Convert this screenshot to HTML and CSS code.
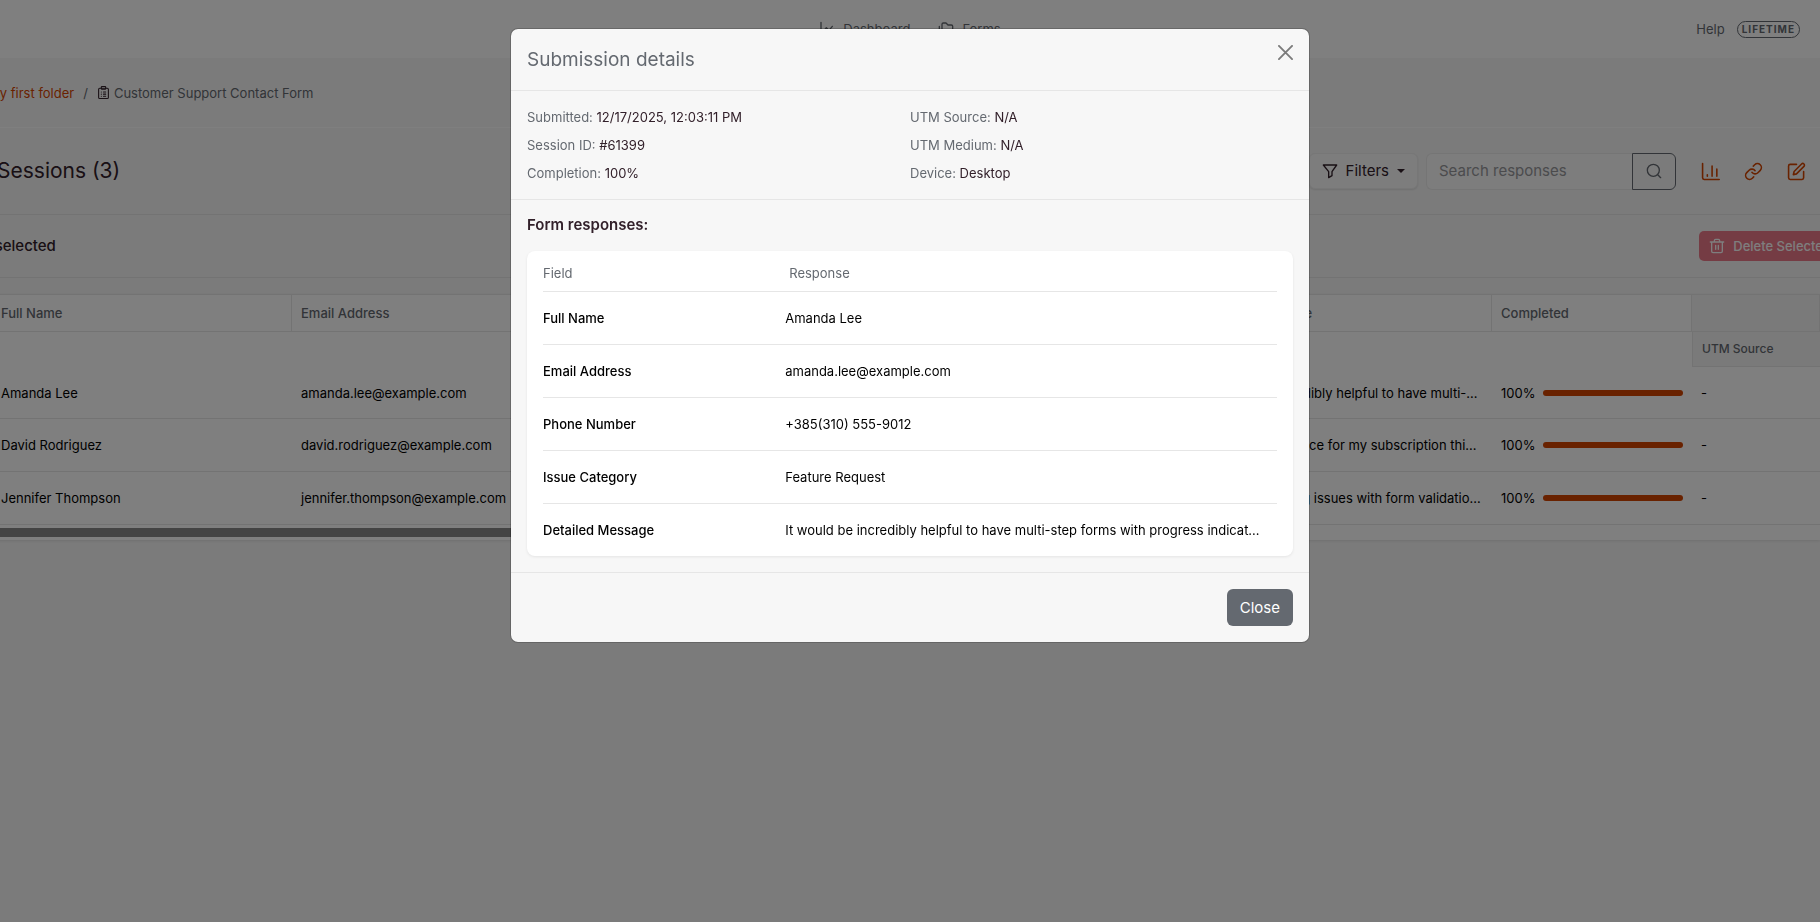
FILE: index.html
```html
<!DOCTYPE html>
<html lang="en">
<head>
  <meta charset="UTF-8" />
  <meta name="viewport" content="width=device-width, initial-scale=1" />
  <title>Sessions - Customer Support Contact Form</title>
  <link rel="stylesheet" href="styles.css">
</head>
<body>
  <header class="navbar">
    <nav class="nav-links">
      <a href="#">
        <svg class="icon" viewBox="0 0 24 24"><path d="M3 2v19h18" /><path d="M7 15l4-5 4 4 5-6" /></svg>
        Dashboard
      </a>
      <a href="#">
        <svg class="icon" viewBox="0 0 24 24"><path d="M8 3h4l3 3h5a2 2 0 0 1 2 2v8a2 2 0 0 1-2 2H8a2 2 0 0 1-2-2V5a2 2 0 0 1 2-2z" /><path d="M2 8v12a2 2 0 0 0 2 2h14" /></svg>
        Forms
      </a>
    </nav>
    <div class="nav-right">
      <a href="#">Help</a>
      <span class="plan-badge">LIFETIME</span>
    </div>
  </header>

  <nav class="breadcrumb">
    <a href="#">My first folder</a>
    <span>/</span>
    <span class="current">
      <svg class="icon" viewBox="0 0 24 24"><rect x="3" y="4" width="18" height="19" rx="2" /><rect x="8" y="1" width="8" height="5" rx="1" /><path d="M8 11h.01M12 11h4M8 15h.01M12 15h4M8 19h.01M12 19h4" /></svg>
      Customer Support Contact Form
    </span>
  </nav>

  <main>
    <div class="toolbar">
      <h1>Sessions (3)</h1>
      <div class="tools">
        <button type="button" class="filter-btn">
          <svg class="icon" viewBox="0 0 24 24"><path d="M2 3h20l-7 10v6l-5 3v-9z" /></svg>
          Filters
          <span class="caret"></span>
        </button>
        <form class="search">
          <input type="text" placeholder="Search responses" aria-label="Search responses" />
          <button type="button" aria-label="Search">
            <svg class="icon" viewBox="0 0 24 24"><circle cx="11" cy="11" r="9" /><path d="M18 18l4 4" /></svg>
          </button>
        </form>
        <div class="actions">
          <a href="#" aria-label="Analytics"><svg class="icon" viewBox="0 0 24 24"><path d="M2 2v18a2 2 0 0 0 2 2h19M8 16v2M14 5v13M20 9v9" /></svg></a>
          <a href="#" aria-label="Link"><svg class="icon" viewBox="0 0 24 24"><path d="M10 13a5 5 0 0 0 7.540.540l3-3a5 5 0 0 0-7.070-7.070l-1.720 1.710" /><path d="M14 11a5 5 0 0 0-7.540-.540l-3 3a5 5 0 0 0 7.070 7.070l1.710-1.710" /></svg></a>
          <a href="#" aria-label="Edit"><svg class="icon" viewBox="0 0 24 24"><path d="M12 3H4a2 2 0 0 0-2 2v15a2 2 0 0 0 2 2h15a2 2 0 0 0 2-2v-8" /><path d="M18.400 2.600a2.100 2.100 0 0 1 3 3L12 15l-4 1 1-4z" /></svg></a>
        </div>
      </div>
    </div>

    <div class="selection-bar">
      <span>0 selected</span>
      <button type="button" class="delete-btn" disabled>
        <svg class="icon" viewBox="0 0 24 24"><path d="M2 6h20M4 6v14a2 2 0 0 0 2 2h12a2 2 0 0 0 2-2V6M8 6V4a2 2 0 0 1 2-2h4a2 2 0 0 1 2 2v2M10 11v6M14 11v6" /></svg>
        Delete Selected
      </button>
    </div>

    <div class="grid-card">
      <table class="grid">
        <colgroup>
          <col class="col-wide"><col class="col-wide"><col class="col-wide"><col class="col-wide"><col class="col-wide"><col class="col-done"><col class="col-utm">
        </colgroup>
        <thead>
          <tr class="head-main">
            <th>Full Name</th>
            <th>Email Address</th>
            <th>Phone Number</th>
            <th>Issue Category</th>
            <th>Detailed Message</th>
            <th>Completed</th>
            <th class="utm"></th>
          </tr>
          <tr class="head-sub">
            <th colspan="6"></th>
            <th class="utm">UTM Source</th>
          </tr>
        </thead>
        <tbody>
          <tr>
            <td>Amanda Lee</td>
            <td>amanda.lee@example.com</td>
            <td>+385(310) 555-9012</td>
            <td>Feature Request</td>
            <td>It would be incredibly helpful to have multi-step forms with progress indicators</td>
            <td><div class="done">100%<div class="progress"></div></div></td>
            <td>-</td>
          </tr>
          <tr>
            <td>David Rodriguez</td>
            <td>david.rodriguez@example.com</td>
            <td>+385(310) 555-3456</td>
            <td>Billing</td>
            <td>I was charged twice for my subscription this month</td>
            <td><div class="done">100%<div class="progress"></div></div></td>
            <td>-</td>
          </tr>
          <tr>
            <td>Jennifer Thompson</td>
            <td>jennifer.thompson@example.com</td>
            <td>+385(310) 555-7890</td>
            <td>Technical Issue</td>
            <td>I am experiencing issues with form validation on mobile</td>
            <td><div class="done">100%<div class="progress"></div></div></td>
            <td>-</td>
          </tr>
        </tbody>
      </table>
      <div class="scroll-track"><div class="scroll-thumb"></div></div>
    </div>
  </main>

  <div class="backdrop">
    <div class="modal" role="dialog" aria-modal="true" aria-labelledby="modalTitle">
      <div class="modal-header">
        <h2 id="modalTitle">Submission details</h2>
        <button type="button" class="close-x" aria-label="Close dialog">
          <svg viewBox="0 0 16 16"><path d="M1 1l14 14M15 1L1 15" /></svg>
        </button>
      </div>
      <div class="meta">
        <div>Submitted: <b>12/17/2025, 12:03:11 PM</b></div>
        <div>UTM Source: <b>N/A</b></div>
        <div>Session ID: <b>#61399</b></div>
        <div>UTM Medium: <b>N/A</b></div>
        <div>Completion: <b>100%</b></div>
        <div>Device: <b>Desktop</b></div>
      </div>
      <div class="modal-body">
        <h3>Form responses:</h3>
        <div class="card">
          <table class="responses">
            <thead>
              <tr><th>Field</th><th>Response</th></tr>
            </thead>
            <tbody>
              <tr><th>Full Name</th><td>Amanda Lee</td></tr>
              <tr><th>Email Address</th><td>amanda.lee@example.com</td></tr>
              <tr><th>Phone Number</th><td>+385(310) 555-9012</td></tr>
              <tr><th>Issue Category</th><td>Feature Request</td></tr>
              <tr><th>Detailed Message</th><td>It would be incredibly helpful to have multi-step forms with progress indicators</td></tr>
            </tbody>
          </table>
        </div>
      </div>
      <div class="modal-footer">
        <button type="button" class="close-btn">Close</button>
      </div>
    </div>
  </div>
</body>
</html>
```
FILE: styles.css
```css
* {
  box-sizing: border-box;
}
body {
  margin: 0;
  min-height: 100vh;
  overflow: hidden;
  font-family: Inter, "Liberation Sans", sans-serif;
  font-size: 13px;
  line-height: 20px;
  color: #32202a;
  background: #f7f7f7;
}
h1, h2, h3 {
  margin: 0;
}
a {
  color: #d34500;
  text-decoration: none;
}
button, input {
  font: inherit;
  color: inherit;
}
.icon {
  width: 16px;
  height: 16px;
  flex: none;
  fill: none;
  stroke: currentColor;
  stroke-width: 2;
  stroke-linecap: round;
  stroke-linejoin: round;
}

/* top bar */
.navbar {
  display: grid;
  grid-template-columns: 1fr auto 1fr;
  align-items: center;
  height: 58px;
  padding: 0 20px;
  background: #fff;
}
.navbar a {
  display: flex;
  align-items: center;
  gap: 8px;
  color: #646970;
}
.nav-links {
  grid-column: 2;
  display: flex;
  gap: 28px;
}
.nav-right {
  display: flex;
  justify-content: flex-end;
  align-items: center;
  gap: 12px;
}
.plan-badge {
  padding: 0 4px;
  border: 1px solid #646970;
  border-radius: 9px;
  font-size: 10px;
  line-height: 15px;
  font-weight: 700;
  letter-spacing: 1px;
  color: #646970;
}

.breadcrumb {
  display: flex;
  align-items: center;
  gap: 9px;
  height: 70px;
  margin-left: -12px;
  border-bottom: 1px solid #fff;
  color: #646970;
}
.current {
  display: flex;
  align-items: center;
  gap: 4px;
}
.current .icon {
  width: 13px;
  height: 13px;
  color: #32202a;
}

/* sessions toolbar */
.toolbar {
  display: flex;
  justify-content: space-between;
  align-items: center;
  height: 87px;
  margin-left: -3px;
  padding-right: 14px;
  border-bottom: 1px solid #e6e6e6;
}
.toolbar h1 {
  font-size: 21px;
  font-weight: 400;
}
.tools {
  display: flex;
  align-items: center;
}
.filter-btn {
  display: flex;
  align-items: center;
  gap: 8px;
  height: 36px;
  margin-right: 8px;
  padding: 0 12px;
  border: 1px solid #eee;
  border-radius: 6px;
  background: #fbfbfb;
  box-shadow: 0 1px 2px rgba(0, 0, 0, 0.1);
  font-size: 15px;
}
.caret {
  border: 4px solid transparent;
  border-top-color: currentColor;
  border-bottom: 0;
}
.search {
  display: flex;
  height: 37px;
}
.search input {
  width: 206px;
  padding: 0 12px;
  border: 1px solid #eaeaea;
  border-right: 0;
  border-radius: 6px 0 0 6px;
  background: #fafafa;
  font-size: 15px;
}
.search input::placeholder {
  color: #97979b;
}
.search button {
  display: flex;
  align-items: center;
  justify-content: center;
  width: 44px;
  padding: 0;
  border: 1px solid #646970;
  border-radius: 0 6px 6px 0;
  background: transparent;
  color: #646970;
}
.actions {
  display: flex;
  gap: 24px;
  margin-left: 25px;
}
.actions a {
  display: flex;
}
.actions .icon {
  width: 19px;
  height: 19px;
}

.selection-bar {
  display: flex;
  justify-content: space-between;
  align-items: center;
  height: 63px;
  margin: 0 -21px 16px -19px;
  border-bottom: 1px solid #e6e6e6;
  font-size: 15px;
}
.selection-bar span {
  font-weight: 500;
}
.delete-btn {
  display: flex;
  align-items: center;
  gap: 8px;
  height: 30px;
  padding: 0 10px;
  border: 0;
  border-radius: 5px;
  background: #e6364f;
  color: #fff;
  font-size: 13px;
  font-weight: 500;
  opacity: 0.65;
}

/* data grid */
.grid-card {
  margin-left: -8px;
  border-top: 1px solid #e6e6e6;
  background: #fff;
  box-shadow: 0 1px 3px rgba(0, 0, 0, 0.1);
}
.grid {
  width: 100%;
  table-layout: fixed;
  border-collapse: separate;
  border-spacing: 0;
  color: #000;
}
.col-wide {
  width: 300px;
}
.col-done {
  width: 200px;
}
.grid th, .grid td {
  padding: 0 9px;
  text-align: left;
  overflow: hidden;
  white-space: nowrap;
  text-overflow: ellipsis;
}
.grid th {
  font-weight: 500;
  color: #646970;
}
.head-main th {
  height: 37px;
  border-right: 1px solid #e6e6e6;
  border-bottom: 1px solid #e6e6e6;
}
.head-sub th {
  height: 35px;
  font-size: 12px;
}
.grid .utm {
  background: #f5f5f5;
  border-bottom: 1px solid #e6e6e6;
}
.head-sub .utm {
  border-left: 1px solid #e6e6e6;
}
.grid td {
  height: 53px;
  border-bottom: 1px solid #e6e6e6;
}
.grid tbody tr:first-child td {
  height: 52px;
}
.done {
  display: flex;
  align-items: center;
  gap: 8px;
}
.progress {
  flex: 1;
  height: 6px;
  border-radius: 3px;
  background: #d34500;
}
.scroll-track {
  padding: 3px 0;
}
.scroll-thumb {
  width: 50%;
  height: 9px;
  background: #888;
}

/* submission modal */
.backdrop {
  position: fixed;
  inset: 0;
  padding: 28px 16px;
  background: rgba(0, 0, 0, 0.5);
}
.modal {
  max-width: 800px;
  margin: 0 auto;
  border: 1px solid rgba(0, 0, 0, 0.18);
  border-radius: 8px;
  background: #f7f7f7;
  background-clip: padding-box;
}
.modal-header {
  display: flex;
  justify-content: space-between;
  align-items: flex-start;
  padding: 16px;
  border-bottom: 1px solid #e6e6e6;
}
.modal-header h2 {
  font-size: 19px;
  line-height: 29px;
  font-weight: 400;
  color: #646970;
}
.close-x {
  display: flex;
  padding: 0;
  border: 0;
  background: none;
}
.close-x svg {
  width: 15px;
  height: 15px;
  stroke: #7b7b7b;
  stroke-width: 2;
  stroke-linecap: round;
}
.meta {
  display: grid;
  grid-template-columns: 1fr 1fr;
  gap: 8px 0;
  padding: 16px;
  border-bottom: 1px solid #e6e6e6;
  color: #646970;
}
.meta b {
  font-weight: 400;
  color: #32202a;
}
.modal-body {
  padding: 15px 16px 16px;
}
.modal-body h3 {
  margin-bottom: 16px;
  font-size: 15px;
  font-weight: 600;
}
.card {
  padding: 0 16px;
  border-radius: 8px;
  background: #fff;
  box-shadow: 0 1px 3px rgba(0, 0, 0, 0.08);
}
.responses {
  width: 100%;
  table-layout: fixed;
  border-collapse: separate;
  border-spacing: 0;
  color: #000;
}
.responses th, .responses td {
  height: 53px;
  padding: 0 12px 0 0;
  border-bottom: 1px solid #e6e6e6;
  text-align: left;
  font-weight: 500;
  overflow: hidden;
  white-space: nowrap;
  text-overflow: ellipsis;
}
.responses th:first-child {
  width: 33%;
}
.responses thead th {
  height: 41px;
  padding-top: 4px;
  font-weight: 400;
  color: #646970;
}
.responses thead th:last-child {
  padding-left: 4px;
}
.responses td {
  font-weight: 400;
}
.responses tbody tr:last-child > * {
  height: 52px;
  border-bottom: 0;
}
.modal-footer {
  display: flex;
  justify-content: flex-end;
  padding: 16px;
  border-top: 1px solid #e6e6e6;
}
.close-btn {
  height: 37px;
  padding: 0 13px;
  border: 0;
  border-radius: 6px;
  background: #646970;
  color: #fff;
  font-size: 15px;
}
```
